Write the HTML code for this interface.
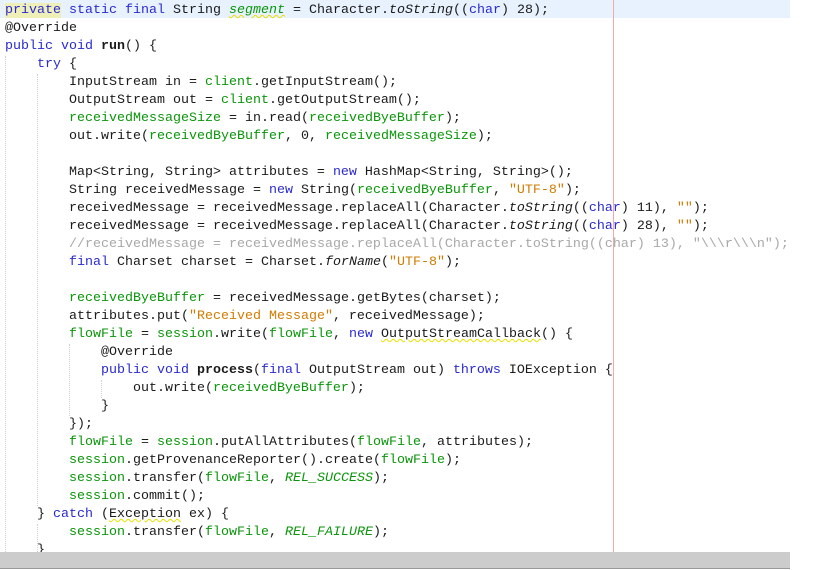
<!DOCTYPE html>
<html><head><meta charset="utf-8"><style>
html,body{margin:0;padding:0;background:#fff;width:814px;height:570px;overflow:hidden;position:relative}
.code{position:absolute;left:5px;top:2px;font-family:"Liberation Mono","Courier New",monospace;font-size:13.33px;line-height:18px;color:#1a1a1a;white-space:pre}
.hl{position:absolute;left:0;top:0;width:790px;height:18px;background:#e8f2fe}
.k{color:#2a2ad0}.g{color:#0a960a}.s{color:#d07c00}.i{font-style:italic}.b{font-weight:bold}.c{color:#a8a8a8}
.w{text-decoration:underline wavy #e8e000;text-decoration-thickness:1px}
.y{background:#efefb8}
.guide{position:absolute;width:0;border-left:1px dotted #d0d0d0}
.red{position:absolute;left:613px;top:0;width:1px;height:552px;background:#f4a8a8}
.bar{position:absolute;left:0;top:552px;width:790px;height:16px;background:#cccccc}
.bl{position:absolute;left:0;top:568px;width:790px;height:1px;background:#999}
</style></head><body>
<div class="hl"></div>
<div class="guide" style="left:5px;top:56px;height:496px"></div>
<div class="guide" style="left:37px;top:74px;height:432px"></div>
<div class="guide" style="left:69px;top:344px;height:72px"></div>
<div class="guide" style="left:101px;top:380px;height:18px"></div>
<div class="guide" style="left:37px;top:524px;height:28px"></div>
<div class="red"></div>
<div class="code"><span class="k y">private</span><span class="k"> static final </span>String <span class="g i w">segment</span> = Character.<span class="i">toString</span>((<span class="k">char</span>) 28);
@Override
<span class="k">public void </span><span class="b">run</span>() {
    <span class="k">try</span> {
        InputStream in = <span class="g">client</span>.getInputStream();
        OutputStream out = <span class="g">client</span>.getOutputStream();
        <span class="g">receivedMessageSize</span> = in.read(<span class="g">receivedByeBuffer</span>);
        out.write(<span class="g">receivedByeBuffer</span>, 0, <span class="g">receivedMessageSize</span>);

        Map&lt;String, String&gt; attributes = <span class="k">new</span> HashMap&lt;String, String&gt;();
        String receivedMessage = <span class="k">new</span> String(<span class="g">receivedByeBuffer</span>, <span class="s">"UTF-8"</span>);
        receivedMessage = receivedMessage.replaceAll(Character.<span class="i">toString</span>((<span class="k">char</span>) 11), <span class="s">""</span>);
        receivedMessage = receivedMessage.replaceAll(Character.<span class="i">toString</span>((<span class="k">char</span>) 28), <span class="s">""</span>);
        <span class="c">//receivedMessage = receivedMessage.replaceAll(Character.toString((char) 13), "\\\r\\\n");</span>
        <span class="k">final</span> Charset charset = Charset.<span class="i">forName</span>(<span class="s">"UTF-8"</span>);

        <span class="g">receivedByeBuffer</span> = receivedMessage.getBytes(charset);
        attributes.put(<span class="s">"Received Message"</span>, receivedMessage);
        <span class="g">flowFile</span> = <span class="g">session</span>.write(<span class="g">flowFile</span>, <span class="k">new</span> <span class="w">OutputStreamCallback</span>() {
            @Override
            <span class="k">public void </span><span class="b">process</span>(<span class="k">final</span> OutputStream out) <span class="k">throws</span> IOException {
                out.write(<span class="g">receivedByeBuffer</span>);
            }
        });
        <span class="g">flowFile</span> = <span class="g">session</span>.putAllAttributes(<span class="g">flowFile</span>, attributes);
        <span class="g">session</span>.getProvenanceReporter().create(<span class="g">flowFile</span>);
        <span class="g">session</span>.transfer(<span class="g">flowFile</span>, <span class="g i">REL_SUCCESS</span>);
        <span class="g">session</span>.commit();
    } <span class="k">catch</span> (<span class="w">Exception</span> ex) {
        <span class="g">session</span>.transfer(<span class="g">flowFile</span>, <span class="g i">REL_FAILURE</span>);
    }
</div>
<div class="bar"></div>
<div class="bl"></div>
</body></html>
